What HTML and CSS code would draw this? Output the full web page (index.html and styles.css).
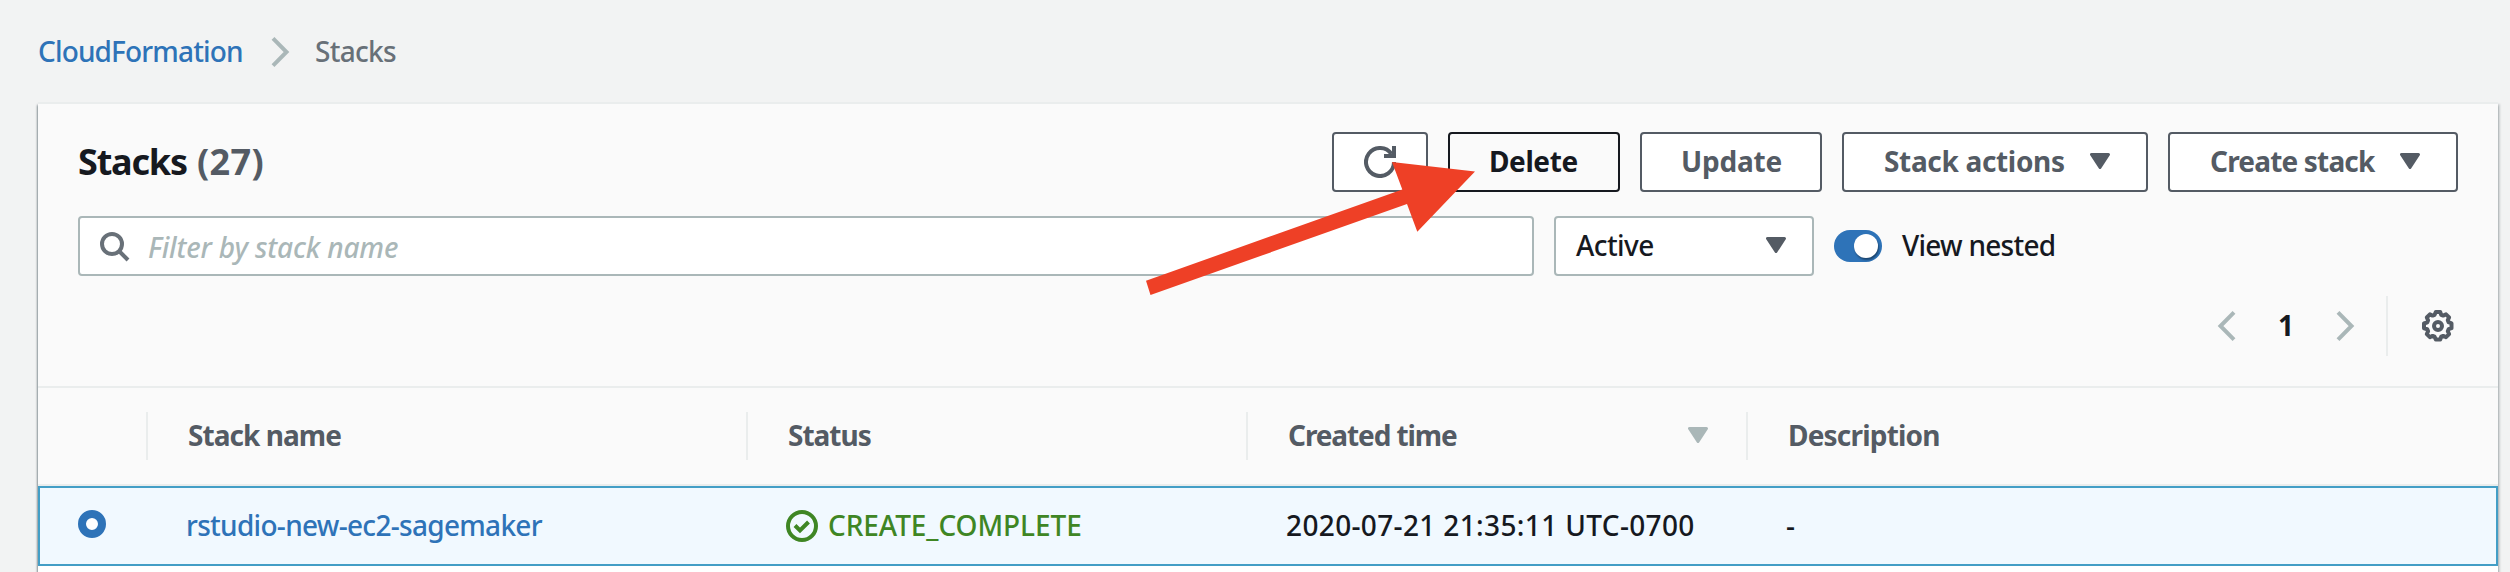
FILE: index.html
```html
<!DOCTYPE html>
<html lang="en">
<head>
<meta charset="utf-8">
<title>CloudFormation - Stacks</title>
<link rel="stylesheet" href="styles.css">
</head>
<body>
<nav class="breadcrumb">
  <a class="crumb-link" href="#">CloudFormation</a>
  <svg class="crumb-sep" width="20" height="32" viewBox="0 0 20 32"><path d="M3 2.4 16.500 16 3 29.600" fill="none" stroke="#aab7b8" stroke-width="4"/></svg>
  <span class="crumb-current">Stacks</span>
</nav>
<main class="card">
  <header class="toolbar">
    <h1 class="title"><span class="title-name">Stacks</span><span class="title-count">(27)</span></h1>
    <div class="actions">
      <button class="btn btn-refresh" aria-label="Refresh"><svg width="32" height="32" viewBox="0 0 32 32"><path d="M30 16A14 14 0 1 1 27.500 8" fill="none" stroke="#545b64" stroke-width="4" /><path d="M20 10H30V0" fill="none" stroke="#545b64" stroke-width="4"/></svg></button>
      <button class="btn btn-delete">Delete</button>
      <button class="btn btn-update">Update</button>
      <button class="btn btn-actions">Stack actions<svg class="caret" width="20" height="16" viewBox="0 0 20 16"><path d="M1.500 1.500h17L10 14.500z"/></svg></button>
      <button class="btn btn-create">Create stack<svg class="caret" width="20" height="16" viewBox="0 0 20 16"><path d="M1.500 1.500h17L10 14.500z"/></svg></button>
    </div>
  </header>
  <section class="filters">
    <div class="search">
      <svg width="30" height="30" viewBox="0 0 30 30"><circle cx="12" cy="12" r="10" fill="none" stroke="#687078" stroke-width="4"/><path d="m19 19 9 9" stroke="#687078" stroke-width="4"/></svg>
      <span class="placeholder">Filter by stack name</span>
    </div>
    <div class="select"><span>Active</span><svg class="caret" width="20" height="16" viewBox="0 0 20 16"><path d="M1.500 1.500h17L10 14.500z"/></svg></div>
    <div class="toggle"><span class="knob"></span></div>
    <span class="toggle-label">View nested</span>
  </section>
  <section class="paging">
    <svg width="20" height="32" viewBox="0 0 20 32"><path d="M17 2.400 3.500 16 17 29.600" fill="none" stroke="#aab7b8" stroke-width="4"/></svg>
    <span class="page">1</span>
    <svg width="20" height="32" viewBox="0 0 20 32"><path d="M3 2.400 16.500 16 3 29.600" fill="none" stroke="#aab7b8" stroke-width="4"/></svg>
    <span class="paging-rule"></span>
    <svg class="gear" width="32" height="32" viewBox="0 0 32 32" fill="none" stroke="#545b64" stroke-width="4" stroke-linejoin="round"><path d="M13.800 2h4.400l1 2.800 2 .8 2.800-1.300 3.100 3.100-1.300 2.800.8 2 2.900 1.200v4.800l-2.900 1-.8 2 1.300 2.900-3.100 3-2.800-1.200-2 .8-1 2.900h-4.400l-1.200-2.900-2-.8-2.700 1.200-3.100-3 1.300-2.900-.8-2L2 18.300v-4.800l3.300-1.200.8-2-1.300-2.800L7.900 4.400l2.700 1.200 2-.8z"/><circle cx="16" cy="16" r="4"/></svg>
  </section>
  <div class="row head">
    <div class="cell"></div>
    <div class="cell th-name">Stack name</div>
    <div class="cell th-status">Status</div>
    <div class="cell th-time"><span>Created time</span><svg class="caret sort" width="20" height="16" viewBox="0 0 20 16"><path d="M1.500 1.500h17L10 14.500z"/></svg></div>
    <div class="cell th-desc">Description</div>
  </div>
  <div class="row selected">
    <div class="cell td-radio"><span class="radio"></span></div>
    <div class="cell td-name"><a href="#">rstudio-new-ec2-sagemaker</a></div>
    <div class="cell td-status"><svg width="32" height="32" viewBox="0 0 32 32" fill="none" stroke="#3f8624" stroke-width="4"><circle cx="16" cy="16" r="14"/><path d="m9 15.500 5 5 8.500-8.500"/></svg><span>CREATE_COMPLETE</span></div>
    <div class="cell td-time">2020-07-21 21:35:11 UTC-0700</div>
    <div class="cell td-desc">-</div>
  </div>
</main>
<svg class="pointer" width="332" height="136" viewBox="0 0 332 136"><path d="M2 120.700 258.300 29.500 248 2 331 11.500 273.300 71.700 263 44 6.500 135z" fill="#ee4026"/></svg>
</body>
</html>
```
FILE: styles.css
```css
* { box-sizing: border-box; }
body {
  margin: 0;
  height: 572px;
  overflow: hidden;
  position: relative;
  background: #f2f3f3;
  color: #16191f;
  font: 500 28px/40px "Noto Sans", "Open Sans", sans-serif;
}
a { color: #2e73b8; text-decoration: none; }
svg { display: block; flex: none; }

.breadcrumb { display: flex; align-items: center; height: 104px; padding: 0 0 2px 38px; }
.crumb-link { width: 205px; letter-spacing: -.85px; white-space: nowrap; }
.crumb-sep { margin: 2px 0 0 27px; }
.crumb-current { margin-left: 25px; color: #687078; letter-spacing: -.7px; }

.card {
  width: 2460px;
  height: 480px;
  margin-left: 38px;
  background: #fff;
  box-shadow: 0 -2px 0 #eaeded, 0 2px 2px 0 rgba(0,28,36,.3), 1px 1px 2px 1px rgba(0,28,36,.15), -1px 1px 2px 0 rgba(0,28,36,.3);
}

.toolbar { display: flex; justify-content: space-between; height: 102px; padding: 28px 40px 0; background: #fafafa; }
.title { display: flex; margin: 0; font-size: 36px; line-height: 60px; font-weight: 700; }
.title-name { width: 119px; letter-spacing: -1.200px; }
.title-count { color: #545b64; letter-spacing: .4px; }
.actions { display: flex; gap: 20px; }
.btn {
  display: flex;
  align-items: center;
  height: 60px;
  padding: 0 0 2px 40px;
  border: 2px solid #545b64;
  border-radius: 4px;
  background: #fff;
  color: #545b64;
  font: 700 28px/40px "Noto Sans", sans-serif;
  white-space: nowrap;
}
.btn-refresh { width: 96px; padding: 0 0 0 30px; }
.btn-delete { width: 172px; padding-left: 39px; border-color: #16191f; background: #fafafa; color: #16191f; letter-spacing: -.4px; }
.btn-update { width: 182px; padding-left: 39px; letter-spacing: -.2px; }
.btn-actions { width: 306px; letter-spacing: -.33px; justify-content: space-between; padding-right: 36px; }
.btn-create { width: 290px; letter-spacing: -.82px; justify-content: space-between; padding-right: 36px; }
.caret path { fill: #545b64; stroke: #545b64; stroke-width: 3; stroke-linejoin: round; }

.filters { display: flex; align-items: center; height: 80px; padding: 0 40px; background: #fafafa; }
.search { display: flex; align-items: center; width: 1456px; height: 60px; padding: 2px 20px 0; border: 2px solid #aab7b8; border-radius: 4px; background: #fff; }
.placeholder { margin-left: 18px; color: #aab7b8; font-style: italic; letter-spacing: -.16px; }
.select { display: flex; align-items: center; justify-content: space-between; width: 260px; height: 60px; margin-left: 20px; padding: 0 26px 2px 20px; border: 2px solid #aab7b8; border-radius: 4px; background: #fff; letter-spacing: -.6px; }
.toggle { width: 48px; height: 32px; margin-left: 20px; padding: 4px 0 0 20px; border-radius: 16px; background: #2e73b8; }
.knob { display: block; width: 24px; height: 24px; border-radius: 50%; background: #fff; box-shadow: 1px 2px 2px rgba(0,0,0,.4); }
.toggle-label { margin-left: 20px; padding-bottom: 2px; letter-spacing: -.75px; }

.paging { display: flex; align-items: center; justify-content: flex-end; height: 100px; padding: 0 44px 20px 0; background: #fafafa; }
.page { width: 98px; padding-bottom: 2px; text-align: center; font-weight: 700; }
.paging-rule { width: 2px; height: 60px; margin: 0 34px 0 31px; background: #eaeded; }

.row { display: grid; grid-template-columns: 108px 600px 500px 500px 1fr; }
.cell { display: flex; align-items: center; white-space: nowrap; padding-left: 40px; }
.head { height: 100px; border-top: 2px solid #eaeded; border-bottom: 2px solid #eaeded; background: #fafafa; color: #545b64; font-weight: 700; align-items: center; }
.head .cell { height: 48px; padding-bottom: 2px; }
.head .cell + .cell { border-left: 2px solid #eaeded; }
.th-name { letter-spacing: -.95px; }
.th-status { letter-spacing: -1px; }
.th-time { justify-content: space-between; padding-right: 38px; letter-spacing: -1.100px; }
.th-desc { letter-spacing: -.8px; }
.sort path { fill: #aab7b8; stroke: #aab7b8; }

.selected { height: 80px; border: 2px solid #439ec6; background: #f1f9ff; grid-template-columns: 106px 600px 500px 500px 1fr; }
.selected .cell { padding-bottom: 2px; }
.selected .td-radio { padding: 0 0 4px 38px; }
.radio { width: 28px; height: 28px; border: 8px solid #2e73b8; border-radius: 50%; background: #fff; }
.td-name { letter-spacing: -.7px; }
.selected .td-status { padding-bottom: 0; color: #3f8624; letter-spacing: -.07px; }
.td-status span { margin-left: 10px; padding-bottom: 2px; }
.td-time { letter-spacing: .36px; }

.pointer { position: absolute; left: 1144px; top: 160px; }
```
